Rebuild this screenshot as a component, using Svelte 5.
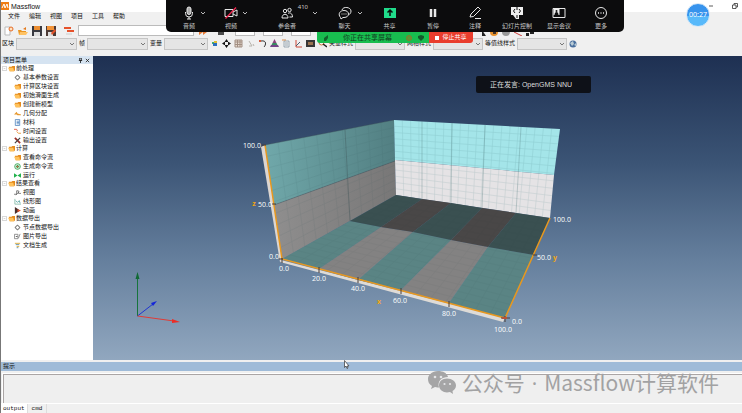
<script>
  const menus = ['文件', '编辑', '视图', '项目', '工具', '帮助']

  const tree = [
    {
      name: '前处理',
      items: [
        { icon: 'gear', name: '基本参数设置' },
        { icon: 'folder', name: '计算区块设置' },
        { icon: 'folder', name: '初始滑面生成' },
        { icon: 'folder', name: '创建新模型' },
        { icon: 'geo', name: '几何分配' },
        { icon: 'doc', name: '材料' },
        { icon: 'time', name: '时间设置' },
        { icon: 'tools', name: '输出设置' }
      ]
    },
    {
      name: '计算',
      items: [
        { icon: 'folder', name: '查看命令流' },
        { icon: 'target', name: '生成命令流' },
        { icon: 'run', name: '运行' }
      ]
    },
    {
      name: '结果查看',
      items: [
        { icon: 'view', name: '视图' },
        { icon: 'chart', name: '线形图' },
        { icon: 'anim', name: '动画' }
      ]
    },
    {
      name: '数据导出',
      items: [
        { icon: 'gear', name: '节点数据导出' },
        { icon: 'image', name: '图片导出' },
        { icon: 'text', name: '文档生成' }
      ]
    }
  ]

  const meeting = [
    { icon: 'mic', name: '音频', arrow: true },
    { icon: 'camera', name: '视频', arrow: true },
    { icon: 'people', name: '参会者', arrow: true, wide: true, count: 410 },
    { icon: 'chat', name: '聊天', arrow: true },
    { icon: 'share', name: '共享' },
    { icon: 'pause', name: '暂停' },
    { icon: 'pen', name: '注释' },
    { icon: 'slides', name: '幻灯片控制' },
    { icon: 'show', name: '显示会议' },
    { icon: 'more', name: '更多' }
  ]

  const tools = ['dots', 'move', 'table', 'erase', 'curve', 'cone', 'sheet', 'axis', 'film', 'search']

  // floor strips: front edge, half depth and back edge
  const front = [[282, 259], [319, 269], [358, 280], [401, 290], [449, 303], [505, 318]]
  const middle = [[350, 221], [381, 227], [413, 232], [451, 240], [488, 247], [534, 255]]
  const back = [[396, 195], [422, 199], [451, 203], [482, 208], [516, 213], [550, 218]]

  const leftWall = [[265, 145], [394, 120], [396, 195], [282, 259]]
  const backWall = [[394, 120], [560, 129], [550, 218], [396, 195]]

  function lerp(a, b, t) {
    return [a[0] + (b[0] - a[0]) * t, a[1] + (b[1] - a[1]) * t]
  }

  function points(list) {
    return list.map(p => p.join(',')).join(' ')
  }

  function strips(near, far) {
    return near.slice(1).map((p, i) => points([near[i], p, far[i + 1], far[i]]))
  }

  function wallGrid([tl, tr, br, bl], cols, rows) {
    const lines = []
    for (let i = 1; i < cols; i++) {
      lines.push([lerp(tl, tr, i / cols), lerp(bl, br, i / cols)])
    }
    for (let i = 1; i < rows; i++) {
      lines.push([lerp(tl, bl, i / rows), lerp(tr, br, i / rows)])
    }
    return lines.map(([a, b]) => `M${a}L${b}`).join('')
  }

  const labels = [
    ['100.0', 252, 148],
    ['50.0', 265, 207],
    ['0.0', 274, 259],
    ['0.0', 284, 271],
    ['20.0', 319, 281],
    ['40.0', 358, 291],
    ['60.0', 400, 303],
    ['80.0', 449, 316],
    ['100.0', 503, 332],
    ['0.0', 517, 324],
    ['50.0', 544, 260],
    ['100.0', 562, 222]
  ]

  let tab = 'output'
</script>

{#snippet select(label, size)}
  <label class="field">
    <span>{label}</span>
    <span class="select {size}">
      <select><option></option></select>
      <svg viewBox="0 0 6 4"><path d="M1 1l2 2 2-2" /></svg>
    </span>
  </label>
{/snippet}

{#snippet treeIcon(name)}
  <svg class="tree-icon" viewBox="0 0 8 8" fill="none">
    {#if name === 'folder'}
      <path d="M1 2h3l1-1h3v5l-1 1H2z" fill="#e58a1c" />
      <path d="M0 3h6l1 4H2z" fill="#ffc25c" />
    {:else if name === 'gear'}
      <circle cx="4" cy="4" r="2.2" stroke="#555" />
      <path d="M4 .8v1M4 6.2v1M.8 4h1M6.2 4h1" stroke="#777" />
    {:else if name === 'geo'}
      <path d="M0 5l3-3 1 2 4 1v1H4L3 5z" fill="#e6982e" />
    {:else if name === 'doc'}
      <path d="M1.500 .5h5v7h-5zM3 2.500h3M3 4h3M3 5.500h3" stroke="#5d8ec4" />
    {:else if name === 'time'}
      <path d="M0 1.500h3l1 2" stroke="#e05538" />
      <path d="M3 4l2 2h3" stroke="#e7952e" />
    {:else if name === 'tools'}
      <path d="M1 1l6 6" stroke="#9a302a" stroke-width="2" />
      <path d="M7 1L1 7" stroke="#444" stroke-width="1.500" />
    {:else if name === 'target'}
      <circle cx="4" cy="4" r="3.200" stroke="#2da24a" stroke-width="1" />
      <path d="M2 4h4M4 2v4" stroke="#35a653" stroke-width="1.500" />
      <circle cx="4" cy="4" r="1" fill="#d65a42" />
    {:else if name === 'run'}
      <path d="M0 1.500l4 2.500-4 2.500zM8 1.500L4 4l4 2.500z" fill="#23b14d" />
    {:else if name === 'view'}
      <path d="M0 6h3V2h2v3h3M2 7l4-4" stroke="#555" stroke-width=".8" />
    {:else if name === 'chart'}
      <path d="M1 1v6h7" stroke="#8ba" />
      <path d="M2 3l2 2 2-2 1 3" stroke="#58a4a1" />
    {:else if name === 'anim'}
      <path d="M1 0l6 4-6 4z" fill="#4b302d" />
      <path d="M4 2.500l4 1.500-4 2z" fill="#e0502a" />
    {:else if name === 'image'}
      <path d="M.5 1.500h4v5h-4zM5 6l2-5" stroke="#888" />
      <path d="M2 4h2" stroke="#555" />
    {:else}
      <path d="M1 1.500h6M3 5h3" stroke="#d9a52b" />
      <path d="M2 3h4M3 6.500h2" stroke="#5688a5" />
    {/if}
  </svg>
{/snippet}

{#snippet meetingIcon(name)}
  <svg class="meeting-icon" viewBox="0 0 14 14" fill="none" stroke="#e8e8e8" stroke-width="1">
    {#if name === 'mic'}
      <rect x="5" y="1" width="4" height="7.500" rx="2" fill="#aaa" />
      <path d="M3.500 6v1.500a3.500 3.500 0 0 0 7 0V6M7 11v2M5 13h4" />
    {:else if name === 'camera'}
      <path d="M1 3.500h8v7H1zM9 6l4-2v6L9 8" />
      <path d="M1.500 12.500L12 1.500" stroke="#f02850" stroke-width="1.300" />
    {:else if name === 'people'}
      <circle cx="5" cy="5" r="1.700" />
      <circle cx="9.500" cy="4" r="1.700" />
      <path d="M2 12c0-5 6-5 6 0zM8 7.500c2-1.500 4.500 0 4.500 3.500h-3" />
    {:else if name === 'chat'}
      <path d="M4 4c1-4 9-3 9 1 0 2-1 3-2 3.500" />
      <path d="M2.500 11.500C-.5 8 2 4.500 6 4.500c6 0 6 7 0 7H5l-2 1.500z" />
      <path d="M3.500 8h1M5.500 8h1M7.500 8h1" />
    {:else if name === 'share'}
      <path d="M1 2h12v10H1z" fill="#20dc8b" stroke="none" />
      <path d="M7 10V4M4.500 6.500L7 4l2.500 2.500" stroke="#07100c" stroke-width="1.500" />
    {:else if name === 'pause'}
      <path d="M5 3v8M9 3v8" stroke-width="2.500" />
    {:else if name === 'pen'}
      <path d="M2 11l1-3 7-7 2.500 2.500-7 7-3.500.5zM7 12.500h6" />
    {:else if name === 'slides'}
      <path d="M1 1h12v8H9v4H6L3 9H1z" fill="#eee" stroke="none" />
      <path d="M5 3L3.500 5 5 7M9 3l1.500 2L9 7M7 1v3M7 9v3" stroke="#111" />
    {:else if name === 'show'}
      <path d="M1 2.500h12v9H1z" />
      <path d="M1.500 3h6v6h-6z" fill="#eee" stroke="none" />
      <circle cx="4.500" cy="5" r="1" fill="#111" stroke="none" />
      <path d="M2.500 9c0-4 4-4 4 0z" fill="#111" stroke="none" />
    {:else}
      <circle cx="7" cy="7" r="5.500" />
      <path d="M4 7h1M6.500 7h1M9 7h1" stroke-width="1.500" />
    {/if}
  </svg>
{/snippet}

{#snippet toolIcon(name)}
  <svg class="tool-icon" viewBox="0 0 9 9" fill="none">
    {#if name === 'dots'}
      <path d="M4 2h3v2H4z" fill="#e2bc31" />
      <path d="M2 3h2v2H2z" fill="#45b36a" />
      <path d="M3 4h4v3H3z" fill="#2c6fbd" />
    {:else if name === 'move'}
      <path d="M4.500 0l2 3h-4zM4.500 9l2-3h-4zM0 4.500l3-2v4zM9 4.500l-3-2v4z" fill="#151515" />
    {:else if name === 'table'}
      <path d="M1 1h7v7H1zM1 3h7M1 5.500h7M3.500 1v7M6 1v7" stroke="#a28f83" fill="#e5d9cf" />
    {:else if name === 'erase'}
      <path d="M3 2l3 5H3M7 5l1 2" stroke="#b8b4ad" />
    {:else if name === 'curve'}
      <path d="M3 2c6-1 5 4 3 6" stroke="#333" />
      <path d="M1 1h2v2H1z" fill="#d95b37" />
    {:else if name === 'cone'}
      <path d="M4.500 0l2 4h-4z" fill="#8a427d" />
      <path d="M2.500 4h4l1 2h-6z" fill="#398a60" />
      <path d="M1 6h7l1 2H0z" fill="#734488" />
    {:else if name === 'sheet'}
      <path d="M2 2h5v6H2zM3 4h3M3 6h3" stroke="#8494a2" stroke-width=".8" />
      <path d="M0 1h4" stroke="#d58c4e" />
    {:else if name === 'axis'}
      <path d="M2 1v7h6" stroke="#cf4939" />
      <path d="M2 7l4-4" stroke="#4b5c6e" />
    {:else if name === 'film'}
      <path d="M0 1h9v7H0z" fill="#373737" />
      <path d="M2 3h5v3H2z" fill="#9a7451" />
    {:else}
      <circle cx="3.500" cy="3.500" r="2.500" stroke="#d57638" />
      <path d="M5 5l4 3" stroke="#222" stroke-width="1.500" />
    {/if}
  </svg>
{/snippet}

<div class="window">
  <header class="title-bar">
    <svg class="logo" viewBox="0 0 8 8">
      <path d="M0 0h8v8H0z" fill="#ef7d13" />
      <path d="M1 6l2-4 1 4M4 6l2-4 1 4" fill="none" stroke="#fff" />
    </svg>
    <h1>Massflow</h1>
    <div class="window-buttons">
      <button aria-label="最小化"><svg viewBox="0 0 6 6"><path d="M1 3h4" /></svg></button>
      <button aria-label="还原"><svg viewBox="0 0 6 6"><path d="M.5 2h3.500v3.500H.5zM2 2V.5h3.500V4H4" /></svg></button>
    </div>
  </header>

  <nav class="menu-bar">
    {#each menus as menu}
      <button>{menu}</button>
    {/each}
  </nav>

  <div class="file-bar">
    <button aria-label="新建">
      <svg viewBox="0 0 10 10"><path d="M1 1h5v8H1z" fill="#fff" stroke="#bbb" /><circle cx="7" cy="3" r="2" fill="#ffe3c0" stroke="#e56a25" /></svg>
    </button>
    <button aria-label="打开">
      <svg viewBox="0 0 10 10"><path d="M0 4h3l1 1h4v4H1z" fill="#e99422" /><path d="M2 6h8L8 9H1z" fill="#ffc364" /><path d="M5 3l3-2v3z" fill="#e3791c" /></svg>
    </button>
    <button aria-label="保存">
      <svg viewBox="0 0 10 10"><path d="M0 0h10v10H0z" fill="#383940" /><path d="M2 0h6v4H2z" fill="#ec8e31" /><path d="M2 6h6v4H2z" fill="#ddd" /></svg>
    </button>
    <button aria-label="另存为">
      <svg viewBox="0 0 10 10"><path d="M0 0h10v10H0z" fill="#4c3a35" /><path d="M1 0h7v4H1z" fill="#f39438" /><path d="M2 6h5v4H2z" fill="#ddd" /><path d="M5 7l4-4 1 2-4 4z" fill="#e5542a" /></svg>
    </button>
    <button class="list" aria-label="列表">
      <svg viewBox="0 0 10 10"><path d="M0 2h7M3 5h7" stroke="#e6522b" stroke-width="2" /><path d="M2 8h6" stroke="#ccc" /></svg>
    </button>
    <input class="path" type="text" aria-label="路径" />
    <button aria-label="播放">
      <svg viewBox="0 0 10 10"><path d="M1 3l4 3-4 3zM5 3l4 3-4 3z" fill="#e67a35" /></svg>
    </button>
    <button class="list" aria-label="帧列表">
      <svg viewBox="0 0 10 10"><path d="M2 2h6v7H2z" fill="#4a4a4a" /></svg>
    </button>
    <div class="ranges">
      <input type="text" aria-label="起始" />
      <input type="text" aria-label="结束" />
      <input type="text" aria-label="步长" />
    </div>
    <div class="view-tools">
      <svg viewBox="0 0 10 10"><path d="M5 4l4 6H5z" fill="#222" /></svg>
      <svg viewBox="0 0 10 10"><circle cx="5" cy="6" r="4" fill="#e8912c" /><path d="M4 5h3v3H4z" fill="#46352a" /></svg>
      <svg viewBox="0 0 10 10"><circle cx="5" cy="6" r="4" fill="#999" /></svg>
      <svg viewBox="0 0 10 10"><path d="M1 6l8 4" stroke="#c83d3a" /></svg>
      <svg viewBox="0 0 10 10"><path d="M1 7h3v3H1zM5 6h4v2H5z" fill="#222" /></svg>
    </div>
  </div>

  <div class="option-bar">
    {@render select('区块', 'large')}
    {@render select('帧', 'large')}
    {@render select('变量', 'small')}
    <div class="tool-group">
      {#each tools as tool}
        <button aria-label={tool}>{@render toolIcon(tool)}</button>
      {/each}
    </div>
    {@render select('矢量样式', 'medium')}
    {@render select('网格样式', 'medium')}
    {@render select('等值线样式', 'medium')}
    <button class="globe" aria-label="全局">
      <svg viewBox="0 0 8 8"><circle cx="4" cy="4" r="3.500" fill="#496e9d" /><path d="M1 3l3-2 1 3-2 2zM5 5l2-2v3z" fill="#b8cbd5" /></svg>
    </button>
  </div>

  <main>
    <aside>
      <div class="panel-title">
        <h2>项目菜单</h2>
        <button aria-label="固定"><svg viewBox="0 0 6 6"><path d="M2 0h2v3H2zM1 3h4M3 3v3" /></svg></button>
        <button aria-label="关闭"><svg viewBox="0 0 6 6"><path d="M1 1l4 4M5 1L1 5" /></svg></button>
      </div>
      <div class="tree">
        {#each tree as group}
          <ul>
            <li class="group">
              <svg class="toggle" viewBox="0 0 6 6"><path d="M.5 .5h5v5h-5zM2 3h2" /></svg>
              {@render treeIcon('folder')}
              <span>{group.name}</span>
            </li>
            {#each group.items as item}
              <li>{@render treeIcon(item.icon)}<span>{item.name}</span></li>
            {/each}
          </ul>
        {/each}
      </div>
    </aside>

    <section class="viewport">
      <svg class="scene" viewBox="93 56 649 304" preserveAspectRatio="xMidYMid slice">
        <defs>
          <linearGradient id="wall" x1="0" x2="1"><stop offset="0" stop-color="#70a8aa" /><stop offset="1" stop-color="#527f82" /></linearGradient>
          <linearGradient id="wall-grey" x1="0" x2="1"><stop offset="0" stop-color="#8f8e8e" /><stop offset="1" stop-color="#787777" /></linearGradient>
        </defs>

        <polygon points="261,147 265,145 283,259 280,262" fill="#dcd6d1" />
        <polygon points="281,260 505,318 503,322 280,262" fill="#dedbd7" />

        <polygon points="265,145 394,120 395,161 274,205" fill="url(#wall)" />
        <polygon points="274,205 395,161 396,195 282,259" fill="url(#wall-grey)" />
        <path d={wallGrid(leftWall, 10, 10)} stroke="#335558" stroke-width=".5" opacity=".15" />
        <path d="M265 145L394 120M345 130L350 221M274 205L395 161" stroke="#3c5154" stroke-width=".6" opacity=".6" />

        <polygon points="394,120 560,129 554,175 395,160" fill="#a4e5e9" />
        <polygon points="395,160 554,175 550,218 396,195" fill="#e5e3e5" />
        <path d={wallGrid(backWall, 20, 12)} stroke="#4d8588" stroke-width=".5" opacity=".25" />
        <path d="M422 121V199M452 123L451 203M485 125L482 208M521 127L516 213" stroke="#4d7779" stroke-width=".6" opacity=".5" />

        {#each strips(front, middle) as shape, i}
          <polygon points={shape} fill={i % 2 ? '#838282' : '#5a8484'} />
        {/each}
        {#each strips(middle, back) as shape, i}
          <polygon points={shape} fill={i % 2 ? '#494747' : '#3a5051'} />
        {/each}
        <path d={wallGrid([back[0], back[5], front[5], front[0]], 15, 15)} stroke="#263f41" stroke-width=".5" opacity=".08" />

        <path d="M265 145L282 259L505 318L550 218" fill="none" stroke="#e8981f" stroke-width="1.500" />
        <path d="M262 145h4M272 204h4M279 259h4M282 258v5M319 267v6M358 277v6M401 288v6M449 301v6M501 318h9M505 316v6M533 255h4" stroke="#493c38" />
        <path d="M502 318h5" stroke="#b5533a" stroke-width="2" />

        {#each labels as [label, x, y]}
          <text class="tick" {x} {y}>{label}</text>
        {/each}
        <text class="axis-name" x="254" y="206">z</text>
        <text class="axis-name" x="379" y="304">x</text>
        <text class="axis-name" x="555" y="260">y</text>

        <path d="M137.500 316V276" stroke="#16743c" />
        <path d="M135.500 279l2-7 2 7z" fill="#116a35" />
        <path d="M137.500 316L153 304" stroke="#1f35d1" />
        <path d="M151 303l6-2-4 5z" fill="#1526d8" />
        <path d="M137.500 316L174 321" stroke="#e03b36" />
        <path d="M172 319l8 3-8 1z" fill="#ed2c25" />
      </svg>
    </section>
  </main>

  <footer>
    <h2>提示</h2>
    <textarea aria-label="输出" readonly></textarea>
    <div class="tabs" role="tablist">
      {#each ['output', 'cmd'] as name}
        <button role="tab" aria-selected={tab === name} class:active={tab === name} on:click={() => (tab = name)}>{name}</button>
      {/each}
    </div>
  </footer>

  <div class="meeting-bar">
    {#each meeting as item}
      <button class:wide={item.wide}>
        {@render meetingIcon(item.icon)}
        <span>{item.name}</span>
        {#if item.count}<small>{item.count}</small>{/if}
        {#if item.arrow}<svg class="arrow" viewBox="0 0 6 4"><path d="M1 1l2 2 2-2" /></svg>{/if}
      </button>
    {/each}
  </div>

  <div class="share-bar">
    <div class="sharing">
      <svg viewBox="0 0 6 6"><path d="M1 6V3l4-3v3L3 6z" fill="#12632c" /></svg>
      <span>你正在共享屏幕</span>
      <svg viewBox="0 0 6 6"><circle cx="3" cy="3" r="2.500" fill="#5d9b35" stroke="#8a7a2c" /></svg>
      <svg viewBox="0 0 6 6"><path d="M3 0l3 1v2L3 6 0 3V1z" fill="#135b2b" /></svg>
    </div>
    <button><i></i>停止共享</button>
  </div>

  <div class="timer">00:27</div>
  <div class="speaker">正在发言: OpenGMS NNU</div>

  <svg class="cursor" viewBox="0 0 6 9"><path d="M.5 .5v7l1.500-1.500 1 2.500 1-.5-1-2h2z" fill="#fff" stroke="#333" stroke-width=".7" /></svg>

  <div class="watermark">
    <svg viewBox="0 0 28 23">
      <path d="M10 0C4 0 0 4 0 8c0 3 1 5 4 7l-1 3 4-2c2 .5 3 .5 4 .5C9 10 14 6 20 6 19 2 15 0 10 0z" fill="#a5a5a6" />
      <path d="M19 7.500c-5 0-8 3-8 7s4 7 8 7l3-.5 3 2-.5-3c2-1 3.500-3 3.500-5.500 0-4-4-7-9-7z" fill="#a5a5a6" />
      <circle cx="7" cy="6" r="1.300" fill="#e5e6e8" /><circle cx="13" cy="6" r="1.300" fill="#e5e6e8" />
      <circle cx="16.500" cy="13" r="1.100" fill="#e5e6e8" /><circle cx="22" cy="13" r="1.100" fill="#e5e6e8" />
    </svg>
    <div><span>公众号</span><span class="dot">·</span><span>Massflow计算软件</span></div>
  </div>
</div>

<style>
  :global(body) {
    margin: 0;
  }

  .window {
    position: relative;
    display: flex;
    flex-direction: column;
    box-sizing: border-box;
    min-height: 100vh;
    overflow: hidden;
    border-left: 1px solid #777;
    background: #f0f0f0;
    color: #111;
    font: 6px/9px "Noto Sans", "Noto Sans CJK SC", sans-serif;
  }

  button {
    padding: 0;
    border: 0;
    background: none;
    color: inherit;
    font: inherit;
  }

  svg {
    display: block;
    flex: none;
  }

  h1,
  h2 {
    margin: 0;
    font: inherit;
  }

  .title-bar {
    display: flex;
    align-items: center;
    gap: 2px;
    height: 12px;
    background: #fff;
  }

  .logo {
    width: 8px;
    height: 8px;
  }

  .title-bar h1 {
    font: 7px/9px "Liberation Sans", sans-serif;
  }

  .window-buttons {
    display: flex;
    gap: 18px;
    margin-left: auto;
    padding-right: 4px;

    svg {
      width: 6px;
      height: 6px;
      fill: none;
      stroke: #333;
      stroke-width: 0.8;
    }
  }

  .menu-bar {
    display: flex;
    align-items: flex-start;
    gap: 9px;
    height: 12px;
    padding-left: 7px;
  }

  .file-bar {
    display: flex;
    align-items: center;
    gap: 4px;
    height: 13px;
    padding-left: 3px;

    svg {
      width: 10px;
      height: 10px;
    }

    .list {
      margin-left: 4px;
    }

    input {
      width: 20px;
      height: 11px;
      padding: 0;
      box-sizing: border-box;
      border: 1px solid #bbb;
      background: #fff;
    }

    .path {
      width: 116px;
    }
  }

  .ranges {
    display: flex;
    gap: 8px;
    padding-left: 5px;
  }

  .view-tools {
    display: flex;
    gap: 2px;
    padding-left: 162px;
  }

  .option-bar {
    display: flex;
    align-items: center;
    gap: 2px;
    height: 13px;
    padding: 0 0 6px 1px;
  }

  .field {
    display: flex;
    align-items: center;
    gap: 2px;
    white-space: nowrap;
  }

  .select {
    position: relative;

    select {
      display: block;
      width: 100%;
      height: 12px;
      box-sizing: border-box;
      border: 1px solid #c5c5c5;
      background: #e5e5e5;
      appearance: none;
    }

    svg {
      position: absolute;
      top: 4px;
      right: 2px;
      width: 6px;
      height: 4px;
      fill: none;
      stroke: #777;
      pointer-events: none;
    }
  }

  .large {
    width: 61px;
  }

  .medium {
    width: 50px;
  }

  .small {
    width: 44px;
  }

  .tool-group {
    display: flex;
    gap: 3px;
  }

  .tool-icon {
    width: 9px;
    height: 9px;
  }

  .globe svg {
    width: 8px;
    height: 8px;
  }

  main {
    display: flex;
    flex: 1;
  }

  aside {
    width: 92px;
    flex: none;
    background: #fff;
  }

  .panel-title {
    display: flex;
    align-items: center;
    gap: 2px;
    height: 8px;
    padding: 0 3px 0 2px;
    background: #d5e3f1;

    h2 {
      margin-right: auto;
    }

    svg {
      width: 5px;
      height: 5px;
      fill: none;
      stroke: #222;
    }
  }

  .tree ul {
    margin: 0 0 -1px;
    padding: 0;
    list-style: none;
  }

  .tree li {
    display: flex;
    align-items: center;
    gap: 2px;
    height: 9px;
    padding-left: 13px;
  }

  .tree li.group {
    gap: 1px;
    padding-left: 1px;
  }

  .tree-icon {
    width: 7px;
    height: 7px;
  }

  .toggle {
    width: 5px;
    height: 5px;
    fill: none;
    stroke: #aaa;
    stroke-width: 0.6;
  }

  .viewport {
    flex: 1;
    position: relative;
    min-height: 240px;
    background: linear-gradient(#1e3052, #3b5475 35%, #657f9d 67%, #91a7bf);
  }

  .scene {
    position: absolute;
    inset: 0;
    width: 100%;
    height: 100%;
  }

  .tick {
    fill: #fff;
    font: 7px "Open Sans", sans-serif;
    text-anchor: middle;
  }

  .axis-name {
    fill: #f0a514;
    font: bold 7px "Open Sans", sans-serif;
    text-anchor: middle;
  }

  footer {
    padding-top: 2px;

    h2 {
      height: 9px;
      padding-left: 2px;
      background: #9fbbd8;
    }

    textarea {
      display: block;
      width: calc(100% - 2px);
      height: 29px;
      margin: 3px 0 0 2px;
      box-sizing: border-box;
      border: 1px solid #aaa5a5;
      border-width: 1px 0 0 1px;
      outline: 1px solid #fff;
      background: #efefef;
      resize: none;
    }
  }

  .tabs {
    display: flex;
    height: 10px;

    button {
      padding: 0 4px;
      border-right: 1px solid #ddd;
      font: 6px/9px "Liberation Mono", monospace;
    }

    .active {
      padding: 0 2px;
      background: #fff;
    }
  }

  .meeting-bar {
    position: absolute;
    top: 0;
    left: 165px;
    display: flex;
    height: 32px;
    padding: 0 2px;
    border-radius: 0 0 5px 5px;
    background: #0c0c0d;
    color: #c9c9c9;

    button {
      position: relative;
      display: flex;
      flex-direction: column;
      align-items: center;
      gap: 2px;
      width: 42px;
      padding-top: 6px;
      white-space: nowrap;
    }

    .wide {
      width: 70px;
    }

    button:nth-child(4),
    button:nth-child(5) {
      width: 45px;
    }

    small {
      position: absolute;
      top: 3px;
      right: 14px;
      font-size: 6px;
      line-height: 9px;
    }

    .arrow {
      position: absolute;
      top: 11px;
      right: 4px;
      width: 6px;
      height: 4px;
      fill: none;
      stroke: #bbb;
    }
  }

  .meeting-icon {
    width: 14px;
    height: 14px;
  }

  .share-bar {
    position: absolute;
    top: 32px;
    left: 316px;
    display: flex;
    height: 11px;
    overflow: hidden;
    border-radius: 0 0 3px 3px;
    line-height: 11px;

    svg {
      width: 6px;
      height: 6px;
    }

    button {
      display: flex;
      align-items: center;
      justify-content: center;
      gap: 3px;
      width: 44px;
      background: #e93d2d;
      color: #fff;
    }

    i {
      width: 4px;
      height: 4px;
      background: #fff;
    }
  }

  .sharing {
    display: flex;
    align-items: center;
    gap: 6px;
    width: 101px;
    padding: 0 5px 0 6px;
    background: #18bd4f;
    color: #123c1e;

    span {
      margin: 0 auto;
      font-size: 7px;
      line-height: 9px;
    }
  }

  .timer {
    position: absolute;
    top: 3px;
    right: 32px;
    width: 22px;
    height: 22px;
    border: 1px solid #d8e9f8;
    border-radius: 50%;
    background: linear-gradient(#3793ed 55%, #58b9fa 55%);
    color: #fff;
    font-size: 7px;
    line-height: 22px;
    text-align: center;
  }

  .speaker {
    position: absolute;
    top: 76px;
    left: 475px;
    padding: 0 19px 0 14px;
    border-radius: 2px;
    background: #0e1118;
    color: #ddd;
    font: 7px/17px "Liberation Sans", "Noto Sans CJK SC", sans-serif;
    white-space: nowrap;
  }

  .cursor {
    position: absolute;
    bottom: 44px;
    left: 343px;
    width: 6px;
    height: 9px;
  }

  .watermark {
    position: absolute;
    right: 23px;
    bottom: 18px;
    display: flex;
    align-items: center;
    gap: 6px;
    color: #a2a2a3;
    font: 21px/24px "Noto Sans CJK SC", sans-serif;
    white-space: nowrap;

    svg {
      width: 28px;
      height: 23px;
    }

    .dot {
      padding: 0 7px;
      font-family: "Open Sans", sans-serif;
    }
  }
</style>
